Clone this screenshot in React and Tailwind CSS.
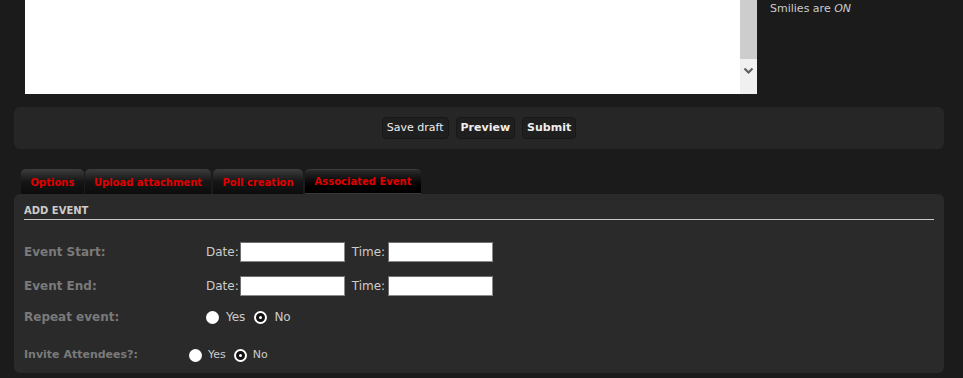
export default function App() {
  const font = { fontFamily: '"DejaVu Sans", Verdana, sans-serif' };
  const Radio = ({ checked }) => (
    <span className="inline-flex items-center justify-center w-[13px] h-[13px] rounded-full bg-white">
      {checked && <span className="w-[9px] h-[9px] rounded-full border-[3px] border-[#111] bg-white" />}
    </span>
  );
  const Input = ({ cls = "" }) => (
    <span className={"inline-block w-[105px] h-[20px] bg-white border border-[#8a8a8a] border-t-[#6e6e6e] border-l-[#6e6e6e] " + cls} />
  );
  const tabBase =
    "h-[25px] flex items-center justify-center rounded-t-[5px] text-[10px] font-bold text-[#e00000] border-t border-[#3c3c3c]";
  const tabIdle = " bg-gradient-to-b from-[#3a3a3a] via-[#151515] to-[#0c0c0c]";
  return (
    <div className="w-full h-[378px] bg-[#1b1b1b] overflow-hidden" style={font}>
      <div className="flex pl-[25px]">
        <div className="w-[732px] h-[94px] bg-white flex justify-end">
          <div className="w-[17px] h-full bg-[#f0f0f0] flex flex-col">
            <div className="h-[59px] bg-[#cdcdcd]" />
            <div className="flex justify-center mt-[8px]">
              <svg width="11" height="8" viewBox="0 0 11 8">
                <path d="M1.5 1.5 L5.5 5.5 L9.5 1.5" fill="none" stroke="#606060" strokeWidth="2.2" />
              </svg>
            </div>
          </div>
        </div>
        <div className="ml-[13px] mt-[1px] text-[11px] text-[#cccccc] leading-[16px]">
          Smilies are <i>ON</i>
        </div>
      </div>

      <div className="ml-[14px] mr-[19px] mt-[13px] h-[42px] rounded-[6px] bg-[#262626] flex items-center justify-center gap-[7px]">
        <button className="h-[22px] px-[4px] rounded-[4px] bg-[#1f1f1f] border border-[#181818] text-[11px] text-[#eeeeee]">
          Save draft
        </button>
        <button className="h-[22px] px-[4px] rounded-[4px] bg-[#1f1f1f] border border-[#181818] text-[11px] font-bold text-[#eeeeee]">
          Preview
        </button>
        <button className="h-[22px] px-[4px] rounded-[4px] bg-[#1f1f1f] border border-[#181818] text-[11px] font-bold text-[#eeeeee]">
          Submit
        </button>
      </div>

      <div className="flex ml-[21px] mt-[20px]">
        <div className={tabBase + tabIdle + " w-[63px]"}>Options</div>
        <div className={tabBase + tabIdle + " w-[126px] ml-[1px]"}>Upload attachment</div>
        <div className={tabBase + tabIdle + " w-[90px] ml-[2px]"}>Poll creation</div>
        <div className={tabBase + " w-[116px] ml-[2px] bg-gradient-to-b from-[#2a2a2a] via-[#0a0a0a] to-[#000000] border-b border-b-[#3a3a3a]"}>
          Associated Event
        </div>
      </div>

      <div className="ml-[14px] mr-[19px] h-[179px] rounded-[6px] bg-[#2a2a2a] px-[10px] pt-[10px]">
        <div className="text-[10px] font-bold text-[#cccccc] leading-[14px] pb-[1px] border-b border-[#c8c8c8]">
          ADD EVENT
        </div>
        <div className="flex items-center h-[20px] mt-[22px]">
          <div className="w-[182px] text-[12px] font-bold text-[#7a7a7a]">Event Start:</div>
          <span className="text-[12px] text-[#cccccc]">Date:</span>
          <Input cls="ml-[1px]" />
          <span className="text-[12px] text-[#cccccc] ml-[7px]">Time:</span>
          <Input cls="ml-[3px]" />
        </div>
        <div className="flex items-center h-[20px] mt-[14px]">
          <div className="w-[182px] text-[12px] font-bold text-[#7a7a7a]">Event End:</div>
          <span className="text-[12px] text-[#cccccc]">Date:</span>
          <Input cls="ml-[1px]" />
          <span className="text-[12px] text-[#cccccc] ml-[7px]">Time:</span>
          <Input cls="ml-[3px]" />
        </div>
        <div className="flex items-center h-[20px] mt-[11px]">
          <div className="w-[182px] text-[12px] font-bold text-[#7a7a7a]">Repeat event:</div>
          <Radio />
          <span className="text-[12px] text-[#cccccc] ml-[7px]">Yes</span>
          <span className="ml-[9px]"><Radio checked /></span>
          <span className="text-[12px] text-[#cccccc] ml-[7px]">No</span>
        </div>
        <div className="flex items-center h-[20px] mt-[18px]">
          <div className="w-[165px] text-[11px] font-bold text-[#7a7a7a]">Invite Attendees?:</div>
          <Radio />
          <span className="text-[11px] text-[#cccccc] ml-[6px]">Yes</span>
          <span className="ml-[8px]"><Radio checked /></span>
          <span className="text-[11px] text-[#cccccc] ml-[6px]">No</span>
        </div>
      </div>
    </div>
  );
}
